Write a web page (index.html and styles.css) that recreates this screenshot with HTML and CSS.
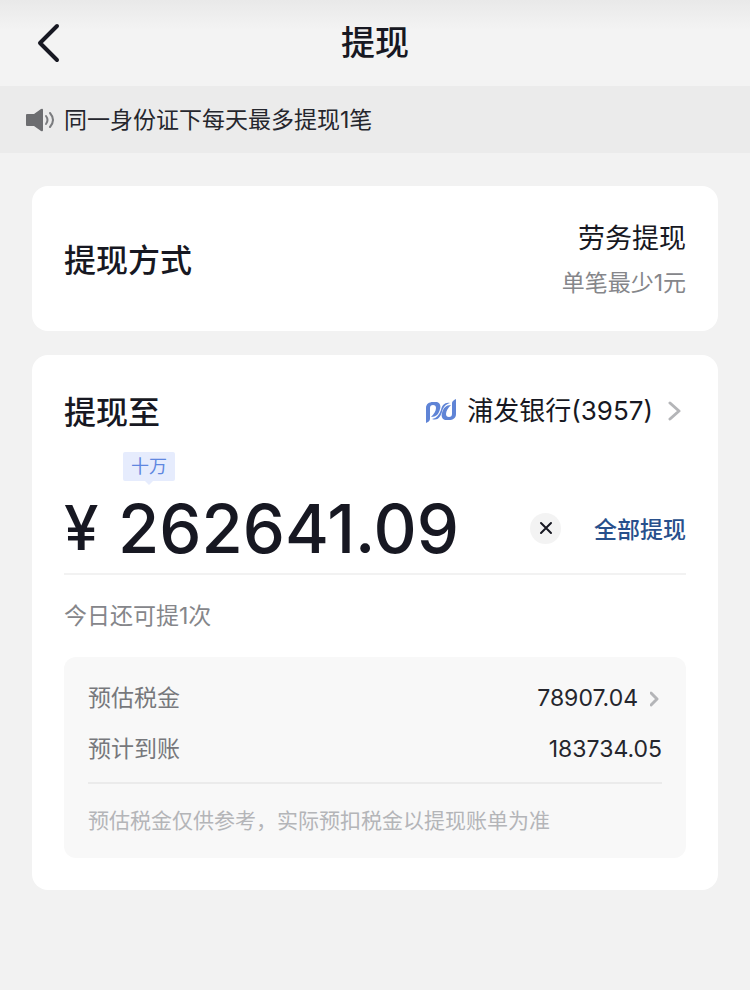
FILE: index.html
```html
<!DOCTYPE html>
<html lang="zh-CN">

<head>
  <meta charset="UTF-8">
  <meta name="viewport" content="width=device-width, initial-scale=1.0">
  <title>提现</title>
  <link rel="stylesheet" href="styles.css">
</head>

<body>
  <header class="header">
    <button class="back" type="button" aria-label="返回">
      <svg width="24" height="40" viewBox="0 0 24 40"><path d="M20 3L3 20L20 37" /></svg>
    </button>
    <h1>提现</h1>
  </header>

  <div class="notice">
    <svg width="30" height="24" viewBox="0 0 30 24">
      <path class="speaker" d="M1 6H8L15 1Q17 0 17 2V22Q17 24 15 23L8 18H1Q0 18 0 17V7Q0 6 1 6Z" />
      <path class="wave" d="M20 8Q23 12 20 16" />
      <path class="wave" d="M24 5Q30 12 24 19" />
    </svg>
    <span>同一身份证下每天最多提现1笔</span>
  </div>

  <main>
    <section class="card method">
      <h2>提现方式</h2>
      <div class="method-info">
        <p class="method-name">劳务提现</p>
        <p class="method-tip">单笔最少1元</p>
      </div>
    </section>

    <section class="card">
      <div class="account">
        <h2><label for="amount">提现至</label></h2>
        <button class="bank" type="button">
          <svg class="logo" width="30" height="24" viewBox="0 0 30 24">
            <path d="M0 24V9C0 5 3 3 7 3H11C14 4 15 7 14 10C13 15 10 18 5 18C8 15 10 12 10 9C10 7 9 6 7 6C5 6 4 7 4 9V20C4 22 2 23 0 24Z" />
            <path d="M30 0V15C30 19 27 21 23 21H19C16 20 15 17 16 14C17 9 20 6 25 6C22 9 20 12 20 15C20 17 21 18 23 18C25 18 26 17 26 15V4C26 2 28 1 30 0Z" />
            <path d="M6 20C11 19 13 16 15 11C16 6 19 3 24 4C20 5 17 8 16 13C14 18 12 22 6 20Z" />
          </svg>
          <span>浦发银行(3957)</span>
          <svg class="arrow" width="14" height="20" viewBox="0 0 14 20"><path d="M2 2L11 10L2 18" /></svg>
        </button>
      </div>

      <div class="amount">
        <span class="unit">十万</span>
        <span class="yen">¥</span>
        <input id="amount" type="text" inputmode="decimal" value="262641.09">
        <button class="clear" type="button" aria-label="清空">
          <svg width="14" height="14" viewBox="0 0 14 14"><path d="M2 2L12 12M12 2L2 12" /></svg>
        </button>
        <button class="all" type="button">全部提现</button>
      </div>

      <p class="times">今日还可提1次</p>

      <div class="detail">
        <dl>
          <div class="row">
            <dt>预估税金</dt>
            <dd>78907.04 <svg class="arrow" width="12" height="16" viewBox="0 0 12 16"><path d="M1 2L7 8L1 14" /></svg></dd>
          </div>
          <div class="row">
            <dt>预计到账</dt>
            <dd>183734.05</dd>
          </div>
        </dl>
        <p class="remark">预估税金仅供参考，实际预扣税金以提现账单为准</p>
      </div>
    </section>
  </main>
</body>

</html>
```
FILE: styles.css
```css
* {
  box-sizing: border-box;
}

body {
  margin: 0;
  background-color: #f2f2f2;
  color: #171822;
  font-family: Inter, "Noto Sans CJK SC", sans-serif;
}

h1, h2, p, dl, dd {
  margin: 0;
}

button {
  padding: 0;
  border: 0;
  background: none;
  color: inherit;
  font-family: inherit;
}

svg {
  display: block;
  fill: none;
  stroke-linecap: round;
  stroke-linejoin: round;
}

.header {
  display: grid;
  grid-template-columns: 60px 1fr 60px;
  align-items: center;
  height: 86px;
  background: linear-gradient(#e9e9e9, #f3f3f3 30px);
}

.header h1 {
  font-size: 34px;
  font-weight: 500;
  line-height: 48px;
  text-align: center;
}

.back {
  padding-left: 37px;
}

.back path {
  stroke: #171822;
  stroke-width: 4;
}

.notice {
  display: flex;
  align-items: center;
  gap: 8px;
  height: 67px;
  padding: 0 26px;
  background-color: #ebebeb;
  color: #25262d;
  font-size: 23px;
}

.notice span {
  padding-bottom: 4px;
}

.speaker {
  fill: #6c6d70;
}

.wave {
  stroke: #7b7c7f;
  stroke-width: 2;
}

main {
  padding: 33px 32px;
}

.card {
  margin-bottom: 24px;
  padding: 32px;
  border-radius: 16px;
  background-color: #fff;
}

h2 {
  padding-top: 4px;
  font-size: 32px;
  font-weight: 500;
  line-height: 48px;
}

.method {
  display: flex;
  align-items: center;
  justify-content: space-between;
  height: 145px;
}

.method-info {
  padding-top: 4px;
  text-align: right;
}

.method-name {
  font-size: 27px;
  line-height: 44px;
}

.method-tip {
  color: #85868a;
  font-size: 23px;
  line-height: 44px;
}

.account {
  display: flex;
  align-items: center;
  justify-content: space-between;
  height: 48px;
}

.bank {
  display: flex;
  align-items: center;
  gap: 11px;
  padding-right: 4px;
  font-size: 26px;
  line-height: 48px;
}

.logo {
  fill: #5f84d6;
}

.arrow {
  stroke: #b4b5b8;
  stroke-width: 3;
}

.bank .arrow {
  margin-left: 4px;
}

.amount {
  position: relative;
  display: flex;
  align-items: center;
  height: 140px;
  padding-top: 48px;
  border-bottom: 2px solid #f2f2f2;
}

.unit {
  position: absolute;
  top: 17px;
  left: 59px;
  width: 52px;
  border-radius: 2px;
  background-color: #e6ecfd;
  color: #5f87e0;
  font-size: 18px;
  line-height: 29px;
  text-align: center;
}

.unit::after {
  content: "";
  position: absolute;
  top: 29px;
  left: 22px;
  border: 4px solid transparent;
  border-top-color: #e6ecfd;
}

.yen {
  width: 54px;
  font-size: 62px;
  font-weight: 500;
  line-height: 80px;
}

.amount input {
  flex: 1;
  min-width: 0;
  height: 80px;
  padding: 0;
  border: 0;
  outline: 0;
  background: none;
  color: inherit;
  font-family: inherit;
  font-size: 67px;
  font-weight: 500;
}

.clear {
  display: grid;
  place-items: center;
  width: 31px;
  height: 31px;
  margin: 0 33px;
  border-radius: 50%;
  background-color: #f3f3f3;
}

.clear path {
  stroke: #171822;
  stroke-width: 2;
}

.all {
  color: #28508c;
  font-size: 23px;
  font-weight: 500;
}

.times {
  margin: 24px 0;
  color: #85868a;
  font-size: 23px;
  line-height: 34px;
}

.detail {
  padding: 16px 24px;
  border-radius: 12px;
  background-color: #f8f8f8;
}

.detail dl {
  padding-bottom: 7px;
  border-bottom: 2px solid #ebebeb;
}

.row {
  display: flex;
  justify-content: space-between;
  font-size: 23px;
  line-height: 51px;
}

.row dt {
  color: #77787c;
}

.row dd {
  display: flex;
  align-items: center;
  gap: 12px;
  color: #25262d;
}

.remark {
  padding: 20px 0 4px;
  color: #b4b5b8;
  font-size: 21px;
  line-height: 34px;
}
```
